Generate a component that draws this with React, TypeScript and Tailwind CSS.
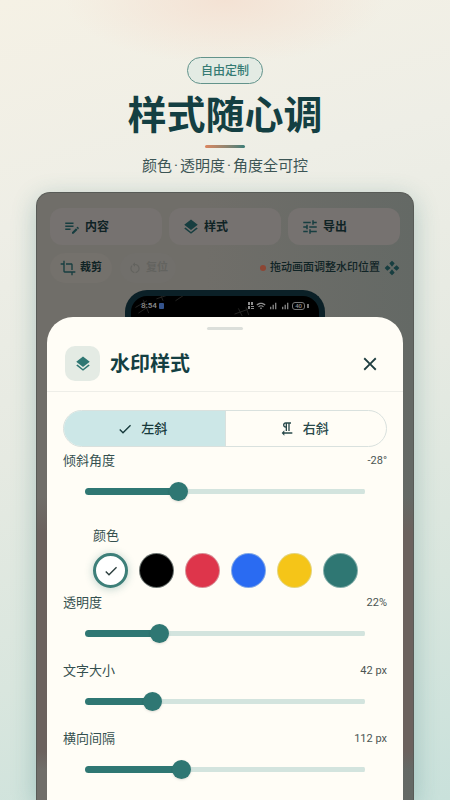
import React, { useState } from 'react'
import cs from 'clsx'
import {
  MdCheck,
  MdClose,
  MdCrop,
  MdEditNote,
  MdLayers,
  MdOutlineFormatTextdirectionRToL,
  MdRestartAlt,
  MdSignalCellularAlt,
  MdTune,
  MdWifi,
} from 'react-icons/md'

const colors = [
  { name: '白色', className: 'bg-white' },
  { name: '黑色', className: 'bg-black' },
  { name: '红色', className: 'bg-[#de354b]' },
  { name: '蓝色', className: 'bg-[#2a6bf2]' },
  { name: '黄色', className: 'bg-[#f5c518]' },
  { name: '青色', className: 'bg-[#2f7773]' },
]

type SliderProps = {
  id: string
  label: string
  unit: string
  min: number
  max: number
  initial: number
}

function Slider({ id, label, unit, min, max, initial }: SliderProps) {
  const [value, setValue] = useState(initial)
  const percent = ((value - min) / (max - min)) * 100
  return (
    <div>
      <div className="flex h-5 items-center justify-between">
        <label htmlFor={id} className="text-[13px] text-[#35504f]">
          {label}
        </label>
        <output htmlFor={id} className="text-[11px] text-[#4c5553]">
          {value}
          {unit}
        </output>
      </div>
      <div className="flex h-10 items-center px-[22px]">
        <input
          id={id}
          type="range"
          min={min}
          max={max}
          value={value}
          onChange={(e) => setValue(Number(e.target.value))}
          className="h-[7px] w-full cursor-pointer appearance-none rounded-full bg-[linear-gradient(#2f7773,#2f7773),linear-gradient(#d3e4de,#d3e4de)] bg-left bg-no-repeat [&::-webkit-slider-thumb]:size-[19px] [&::-webkit-slider-thumb]:appearance-none [&::-webkit-slider-thumb]:rounded-full [&::-webkit-slider-thumb]:bg-[#2f7773] [&::-webkit-slider-thumb]:shadow-sm"
          style={{ backgroundSize: `${percent}% 7px, 100% 5px` }}
        />
      </div>
    </div>
  )
}

function MoveIcon({ className }: { className?: string }) {
  return (
    <svg viewBox="0 0 24 24" fill="currentColor" className={className}>
      <path d="M12 1l4 4-4 5-4-5zM12 14l4 5-4 4-4-4zM1 12l4-4 5 4-5 4zM14 12l5-4 4 4-4 4z" />
    </svg>
  )
}

function Toolbar() {
  const tabs = [
    { label: '内容', Icon: MdEditNote },
    { label: '样式', Icon: MdLayers },
    { label: '导出', Icon: MdTune },
  ]
  return (
    <div className="px-[13px] pt-[15px] text-[#0f2325]">
      <div className="grid grid-cols-3 gap-[7px]">
        {tabs.map(({ label, Icon }) => (
          <button
            key={label}
            className="flex h-[37px] items-center gap-1 rounded-xl bg-[#767270] pl-[13px] text-xs font-bold"
          >
            <Icon className="size-[18px] text-[#173e40]" />
            {label}
          </button>
        ))}
      </div>
      <div className="mt-2 flex h-[30px] items-center gap-2 text-[11px] font-bold">
        <button className="flex h-[30px] items-center gap-1 rounded-full bg-[#74716c] px-2.5">
          <MdCrop className="size-4 text-[#173e40]" />
          裁剪
        </button>
        <button
          disabled
          className="flex h-[30px] items-center gap-1 rounded-full bg-[#716f6b] px-2 text-[#63635f]"
        >
          <MdRestartAlt className="size-3.5" />
          复位
        </button>
        <div className="ml-auto flex items-center gap-1 font-medium">
          <span className="size-1.5 rounded-full bg-[#8d4634]" />
          拖动画面调整水印位置
          <MoveIcon className="size-4 text-[#173e40]" />
        </div>
      </div>
    </div>
  )
}

function PhonePreview() {
  return (
    <div className="mx-auto mt-[7px] h-[27px] w-[200px] overflow-hidden rounded-t-[22px] border-x-[6px] border-t-[6px] border-[#0b2027] bg-black">
      <div className="relative flex h-5 items-center justify-between px-2.5 text-[8px] font-medium text-[#8f8f8f]">
        <svg
          viewBox="0 0 188 21"
          fill="none"
          stroke="#262624"
          className="absolute inset-0 size-full"
        >
          <path d="M0 12l12-7M3 18l14-9M8 4l6 14M22 3l12-4M26-2l3 7M42 5l9-6M104 19l14-5M108 13l4 8M116 12l3 8" />
        </svg>
        <span className="relative flex items-center gap-0.5">
          8:54
          <span className="h-1.5 w-[5px] rounded-[1px] bg-[#34538c]" />
        </span>
        <span className="relative flex items-center gap-0.5">
          <svg viewBox="0 0 6 8" fill="currentColor" className="h-2 w-1.5">
            <path d="M0 0h2v3H0zM3 0h2v3H3zM0 4h2v3H0zM3 4h3v1H3zM3 6h3v1H3z" />
          </svg>
          <MdWifi className="size-2.5" />
          <MdSignalCellularAlt className="size-2.5" />
          <MdSignalCellularAlt className="size-2.5" />
          <span className="rounded-[3px] border border-[#777] px-0.5 text-[6px] leading-[6px]">
            40
          </span>
          <span className="h-1 w-0.5 bg-[#777]" />
        </span>
      </div>
    </div>
  )
}

function StyleSheet() {
  const [direction, setDirection] = useState('left')
  const [color, setColor] = useState('白色')
  return (
    <section className="mx-2.5 flex-1 rounded-t-[26px] bg-[#fffdf6]">
      <div className="flex justify-center pt-2.5">
        <div className="h-[3px] w-9 rounded-full bg-[#dcdfda]" />
      </div>
      <header className="flex items-center border-b border-[#eeeee8] pt-4 pr-[22px] pb-2.5 pl-[18px]">
        <div className="flex size-[35px] items-center justify-center rounded-[10px] bg-[#e4ebe4] text-[#2f7773]">
          <MdLayers className="size-[18px]" />
        </div>
        <h2 className="ml-2.5 flex-1 text-xl font-bold text-[#143f42]">
          水印样式
        </h2>
        <button aria-label="关闭" className="text-[#1f3d40]">
          <MdClose className="size-[22px]" />
        </button>
      </header>
      <div className="px-4 pt-[18px]">
        <div className="flex h-[37px] overflow-hidden rounded-full border border-[#d9e1de] text-[13px] font-medium">
          <button
            className={cs(
              'flex flex-1 items-center justify-center gap-2 pr-1 text-[#16393b]',
              { 'bg-[#cce7e7]': direction === 'left' },
            )}
            onClick={() => setDirection('left')}
          >
            <MdCheck className="size-4" />
            左斜
          </button>
          <button
            className={cs(
              'flex flex-1 items-center justify-center gap-2 border-l border-[#d9e1de] pr-1 text-[#29494b]',
              { 'bg-[#cce7e7]': direction === 'right' },
            )}
            onClick={() => setDirection('right')}
          >
            <MdOutlineFormatTextdirectionRToL className="size-4" />
            右斜
          </button>
        </div>
        <div className="mt-1">
          <Slider id="angle" label="倾斜角度" unit="°" min={-60} max={40} initial={-28} />
        </div>
        <fieldset className="mt-[15px] px-[30px]">
          <legend className="h-5 text-[13px] leading-5 text-[#35504f]">
            颜色
          </legend>
          <div className="mt-[7px] flex gap-[11px]">
            {colors.map((t) => (
              <button
                key={t.name}
                aria-label={t.name}
                aria-pressed={t.name === color}
                className={cs(
                  'flex size-[35px] shrink-0 items-center justify-center rounded-full',
                  t.className,
                  t.name === color
                    ? 'border-[3px] border-[#3d7f79] shadow-[0_1px_8px_#2f777350]'
                    : 'border border-[#d3e4de]/50',
                )}
                onClick={() => setColor(t.name)}
              >
                {t.name === color && (
                  <MdCheck className="size-4 text-[#2b3d3d]" />
                )}
              </button>
            ))}
          </div>
        </fieldset>
        <div className="mt-[5px] space-y-2">
          <Slider id="opacity" label="透明度" unit="%" min={5} max={73} initial={22} />
          <Slider id="size" label="文字大小" unit=" px" min={22} max={112} initial={42} />
          <Slider id="gap" label="横向间隔" unit=" px" min={45} max={245} initial={112} />
        </div>
      </div>
    </section>
  )
}

export default function App() {
  return (
    <main className="flex min-h-screen flex-col bg-[radial-gradient(ellipse_160px_64px_at_50%_0,#f4e2d4,transparent),linear-gradient(165deg,#f5f1e5_0%,#eeeee6_25%,#e6eae2_50%,#d9e6de_75%,#c9e1db_100%)] font-[Roboto,'Noto_Sans_CJK_SC',sans-serif]">
      <header className="flex flex-col items-center pt-[57px] text-center">
        <span className="flex h-[27px] items-center rounded-full border border-[#62938b] bg-[#e3ebe4] px-[13px] text-xs font-medium text-[#357b74]">
          自由定制
        </span>
        <h1 className="mt-2 text-[39px] leading-[48px] font-bold text-[#143f42]">
          样式随心调
        </h1>
        <div className="mt-[5px] h-[3px] w-10 rounded-full bg-linear-to-r from-[#dc8660] to-[#397d78]" />
        <p className="mt-2 text-[15px] leading-5 text-[#3c5555]">
          颜色<span className="mx-0.5">·</span>透明度
          <span className="mx-0.5">·</span>角度全可控
        </p>
      </header>
      <div className="mx-9 mt-4 flex flex-1 flex-col overflow-hidden rounded-t-[14px] border-x border-t border-[#585b57] bg-[linear-gradient(to_bottom,transparent_50%,#6b625e_56%,#6b625e_92%,transparent_95%),linear-gradient(to_right,#706e69_45%,#646965)] shadow-[0_6px_24px_#2f777350]">
        <Toolbar />
        <PhonePreview />
        <StyleSheet />
      </div>
    </main>
  )
}
